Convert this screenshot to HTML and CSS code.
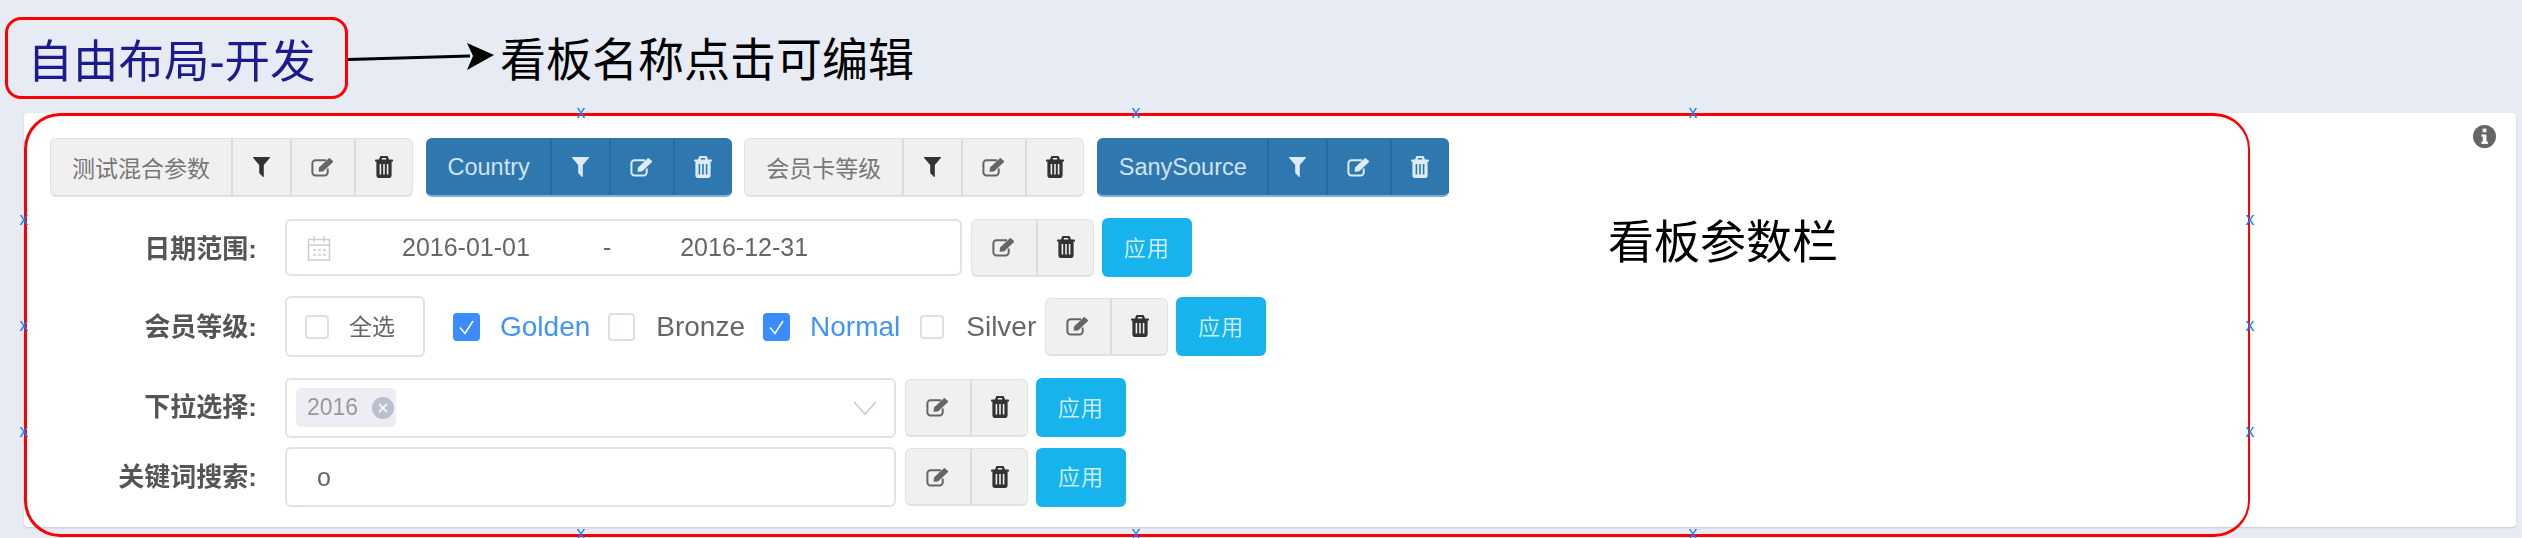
FILE: index.html
```html
<!DOCTYPE html>
<html lang="zh">
<head>
<meta charset="utf-8">
<title>自由布局-开发</title>
<link rel="stylesheet" href="styles.css">
</head>
<body>
<svg class="defs" width="0" height="0" aria-hidden="true">
  <symbol id="i-filter" viewBox="0 0 17 20"><path d="M0.5 0H16.5C17 0 17.2 .6 16.8 1L10.8 8V19.4C10.8 20 10.2 20.1 9.8 19.7L6.6 16.6C6.3 16.3 6.2 16.1 6.2 15.8V8L.2 1C-.2 .6 0 0 .5 0Z"/></symbol>
  <symbol id="i-edit" viewBox="0 0 24 20"><path d="M15 3.2H4.5C2.8 3.2 1.4 4.6 1.4 6.3V15.4C1.4 17.1 2.8 18.5 4.5 18.5H13.6C15.3 18.5 16.7 17.1 16.7 15.4V11.5" fill="none" stroke="currentColor" stroke-width="2"/><path d="M8 10.4 17.6 1.4C18 1 18.6 1 19 1.4L21.8 3.8C22.2 4.2 22.2 4.8 21.8 5.2L12 14.4 7.6 14.8Z"/></symbol>
  <symbol id="i-trash" viewBox="0 0 18 22"><path fill-rule="evenodd" d="M6.4 0H11.6C12.4 0 13 .6 13.2 1.2L14 3.4H17C17.6 3.4 18 3.8 18 4.3V5.6H16.6V19.6C16.6 21 15.6 22 14.4 22H3.6C2.4 22 1.4 21 1.4 19.6V5.6H0V4.3C0 3.8 .4 3.4 1 3.4H4L4.8 1.2C5 .6 5.6 0 6.4 0ZM6.6 3.4H11.4L10.9 2H7.1ZM4.6 8V18.4H6.2V8ZM8.2 8V18.4H9.8V8ZM11.8 8V18.4H13.4V8Z"/></symbol>
  <symbol id="i-check" viewBox="0 0 27 28"><path d="M7 14.5 12 20.5 20 8" fill="none" stroke="#fff" stroke-width="1.6"/></symbol>
</svg>

<header class="topbar">
  <h1 class="title"><span class="title-text">自由布局-开发</span></h1>
  <svg class="arrow" viewBox="0 0 146 30" width="146" height="30" aria-hidden="true"><path d="M0 16.5 122 13" stroke="#000" stroke-width="3" fill="none"/><path d="M119 0 146 12 119 27 125 13Z" fill="#000"/></svg>
  <span class="hint">看板名称点击可编辑</span>
</header>

<main class="panel">
  <svg class="info" viewBox="0 0 23 23" width="23" height="23" aria-hidden="true"><circle cx="11.5" cy="11.5" r="11.5" fill="#666"/><rect x="9.6" y="3.6" width="3.8" height="3.6" fill="#fff"/><path d="M8.4 9.4H13.4V16.6H14.8V19H8.4V16.6H9.8V11.8H8.4Z" fill="#fff"/></svg>

  <div class="row row-params">
    <div class="group">
      <span class="seg seg-label">测试混合参数</span>
      <span class="seg seg-filter"><svg class="ic-filter"><use href="#i-filter"/></svg></span>
      <span class="seg seg-edit"><svg class="ic-edit"><use href="#i-edit"/></svg></span>
      <span class="seg seg-trash"><svg class="ic-trash"><use href="#i-trash"/></svg></span>
    </div>
    <div class="group group-on">
      <span class="seg seg-label">Country</span>
      <span class="seg seg-filter"><svg class="ic-filter"><use href="#i-filter"/></svg></span>
      <span class="seg seg-edit"><svg class="ic-edit"><use href="#i-edit"/></svg></span>
      <span class="seg seg-trash"><svg class="ic-trash"><use href="#i-trash"/></svg></span>
    </div>
    <div class="group">
      <span class="seg seg-label">会员卡等级</span>
      <span class="seg seg-filter"><svg class="ic-filter"><use href="#i-filter"/></svg></span>
      <span class="seg seg-edit"><svg class="ic-edit"><use href="#i-edit"/></svg></span>
      <span class="seg seg-trash"><svg class="ic-trash"><use href="#i-trash"/></svg></span>
    </div>
    <div class="group group-on">
      <span class="seg seg-label">SanySource</span>
      <span class="seg seg-filter"><svg class="ic-filter"><use href="#i-filter"/></svg></span>
      <span class="seg seg-edit"><svg class="ic-edit"><use href="#i-edit"/></svg></span>
      <span class="seg seg-trash"><svg class="ic-trash"><use href="#i-trash"/></svg></span>
    </div>
  </div>

  <div class="row row-date">
    <label class="label">日期范围:</label>
    <div class="field field-date">
      <svg class="cal" viewBox="0 0 26 26" width="26" height="26" aria-hidden="true"><path d="M2.5 4.5H23.5V25H2.5ZM2.5 10H23.5M8 1V7M18 1V7" fill="none" stroke="#c9cdd8" stroke-width="1.5"/><path d="M7 14H10V16H7ZM12 14H15V16H12ZM17 14H20V16H17ZM7 19H10V21H7ZM12 19H15V21H12ZM17 19H20V21H17Z" fill="#d5d8e0"/></svg>
      <span class="date date-from">2016-01-01</span>
      <span class="date date-sep">-</span>
      <span class="date date-to">2016-12-31</span>
    </div>
    <div class="group group-actions">
      <span class="seg seg-edit"><svg class="ic-edit"><use href="#i-edit"/></svg></span>
      <span class="seg seg-trash"><svg class="ic-trash"><use href="#i-trash"/></svg></span>
    </div>
    <button class="apply">应用</button>
  </div>

  <div class="row row-check">
    <label class="label">会员等级:</label>
    <div class="field field-all">
      <span class="box box-small"></span>
      <span class="all-text">全选</span>
    </div>
    <span class="opt opt-on"><span class="box box-on"><svg class="ic-check"><use href="#i-check"/></svg></span><span class="opt-text">Golden</span></span>
    <span class="opt"><span class="box"></span><span class="opt-text">Bronze</span></span>
    <span class="opt opt-on opt-wide"><span class="box box-on"><svg class="ic-check"><use href="#i-check"/></svg></span><span class="opt-text">Normal</span></span>
    <span class="opt opt-last"><span class="box box-small"></span><span class="opt-text">Silver</span></span>
    <div class="group group-actions">
      <span class="seg seg-edit"><svg class="ic-edit"><use href="#i-edit"/></svg></span>
      <span class="seg seg-trash"><svg class="ic-trash"><use href="#i-trash"/></svg></span>
    </div>
    <button class="apply">应用</button>
  </div>

  <div class="row row-select">
    <label class="label">下拉选择:</label>
    <div class="field field-wide field-select">
      <span class="tag">2016<svg class="tag-x" viewBox="0 0 22 22" width="22" height="22" aria-hidden="true"><circle cx="11" cy="11" r="11" fill="#bcc0cc"/><path d="M7 7 15 15M15 7 7 15" stroke="#fff" stroke-width="1.6"/></svg></span>
      <svg class="chev" viewBox="0 0 24 14" width="24" height="14" aria-hidden="true"><path d="M1 1 12 13 23 1" fill="none" stroke="#c6c9d2" stroke-width="1.5"/></svg>
    </div>
    <div class="group group-actions">
      <span class="seg seg-edit"><svg class="ic-edit"><use href="#i-edit"/></svg></span>
      <span class="seg seg-trash"><svg class="ic-trash"><use href="#i-trash"/></svg></span>
    </div>
    <button class="apply">应用</button>
  </div>

  <div class="row row-keyword">
    <label class="label">关键词搜索:</label>
    <div class="field field-wide field-keyword">o</div>
    <div class="group group-actions">
      <span class="seg seg-edit"><svg class="ic-edit"><use href="#i-edit"/></svg></span>
      <span class="seg seg-trash"><svg class="ic-trash"><use href="#i-trash"/></svg></span>
    </div>
    <button class="apply">应用</button>
  </div>
</main>

<div class="callout">
  <span class="mark m-top m-a">x</span><span class="mark m-top m-b">x</span><span class="mark m-top m-c">x</span>
  <span class="mark m-bottom m-a">x</span><span class="mark m-bottom m-b">x</span><span class="mark m-bottom m-c">x</span>
  <span class="mark m-left m-d">x</span><span class="mark m-left m-e">x</span><span class="mark m-left m-f">x</span>
  <span class="mark m-right m-d">x</span><span class="mark m-right m-e">x</span><span class="mark m-right m-f">x</span>
  <span class="callout-text">看板参数栏</span>
</div>
</body>
</html>
```

FILE: styles.css
```css
* { box-sizing: border-box; }

html, body {
  margin: 0;
  padding: 0;
}

body {
  position: relative;
  width: 2522px;
  height: 538px;
  overflow: hidden;
  background: #e7ebf3;
  font-family: "Liberation Sans", "Noto Sans CJK SC", sans-serif;
  color: #666;
}

.defs { position: absolute; }

/* top bar */
.topbar {
  display: flex;
  align-items: center;
  height: 113px;
  padding: 17px 0 14px 5px;
}

.title {
  display: flex;
  align-items: center;
  justify-content: center;
  width: 343px;
  height: 82px;
  margin: 0;
  padding-right: 10px;
  border: 3px solid #f00;
  border-radius: 16px;
  font-size: 45.5px;
  font-weight: 400;
  color: #1b1b8f;
}

.title-text { filter: blur(.6px); }

.arrow { flex: none; }

.hint {
  margin-left: 6px;
  padding-bottom: 4px;
  font-family: "Noto Sans CJK SC", sans-serif;
  font-size: 46px;
  line-height: 1;
  color: #000;
}

/* panel */
.panel {
  position: relative;
  width: 2492px;
  height: 414px;
  margin-left: 24px;
  padding: 25px 0 0 26px;
  background: #fff;
  border-radius: 4px;
  box-shadow: 0 1px 2px rgba(0, 0, 0, .15);
  filter: blur(.6px);
}

.info {
  position: absolute;
  top: 12px;
  right: 20px;
}

.row {
  display: flex;
  align-items: center;
}

.row-params { gap: 12.5px; height: 59px; }
.row-date { height: 59px; margin-top: 21px; }
.row-check { height: 61px; margin-top: 19px; }
.row-select { height: 61px; margin-top: 20px; }
.row-keyword { height: 60px; margin-top: 9px; }

.label {
  flex: none;
  width: 207px;
  margin-right: 28px;
  padding-bottom: 3px;
  font-size: 26px;
  font-weight: 700;
  text-align: right;
  color: #555;
}

.row-check .label,
.row-keyword .label { padding-bottom: 5px; }
.row-select .label { padding-bottom: 7px; }

/* button groups */
.group {
  display: flex;
  flex: none;
  height: 59px;
  background: #f0f0f0;
  border: 1px solid #e2e2e2;
  border-bottom: 2px solid #e0e0e0;
  border-radius: 6px;
  color: #333;
}

.group-on {
  background: #2f78af;
  border-color: #2f78af;
  border-bottom-color: #7fb0d3;
  color: #dcebf7;
}

.group-actions { height: 58px; margin: 0 8px 0 9px; }
.group-actions .seg-trash { width: 57px; }

.seg {
  display: flex;
  align-items: center;
  justify-content: center;
  height: 100%;
  border-left: 2px solid #dcdcdc;
}

.group-on .seg { border-left-color: #296b9e; }

.seg:first-child { border-left: 0; }

.seg-label {
  padding: 0 21px 1px;
  font-size: 23px;
  color: #777;
}

.group-on .seg-label {
  padding: 0 20px 0 21px;
  font-size: 23.5px;
  color: #cfe3f3;
}

.seg-filter { width: 59px; }
.seg-edit { width: 64px; color: #666; }
.seg-trash { width: 58px; }

.group-on .seg-edit { color: #dcebf7; }

.ic-filter { width: 17px; height: 20px; fill: currentColor; }
.ic-edit { width: 24px; height: 20px; fill: currentColor; }
.ic-trash { width: 18px; height: 22px; fill: currentColor; }
.ic-check { display: block; width: 100%; height: 100%; }

/* apply */
.apply {
  flex: none;
  width: 90px;
  height: 59px;
  padding: 0 0 4px;
  border: 0;
  border-radius: 6px;
  background: #17b3ec;
  font-family: inherit;
  font-size: 22px;
  letter-spacing: 1px;
  color: #c9edfb;
}

/* fields */
.field {
  display: flex;
  flex: none;
  align-items: center;
  background: #fff;
  border: 2px solid #e0e2ea;
  border-radius: 6px;
}

.field-date {
  width: 677px;
  height: 57px;
  padding-left: 19px;
  font-size: 25px;
}

.cal { flex: none; }
.date { color: #666; }
.date-from { margin-left: 70px; }
.date-sep { margin-left: 73px; }
.date-to { margin-left: 69px; }

.field-all {
  width: 140px;
  height: 61px;
  margin-right: 28px;
  padding-left: 18px;
}

.all-text {
  margin-left: 20px;
  padding-bottom: 3px;
  font-size: 23px;
  color: #666;
}

.field-wide { width: 611px; height: 60px; }

.field-select {
  justify-content: space-between;
  padding: 0 17px 0 9px;
}

.field-keyword {
  padding-left: 30px;
  font-size: 25px;
  color: #666;
}

.tag {
  display: flex;
  align-items: center;
  width: 100px;
  height: 39px;
  padding-left: 11px;
  background: #eceef3;
  border-radius: 5px;
  font-size: 23px;
  color: #999;
}

.tag-x { margin-left: 14px; }

/* checkboxes */
.box {
  display: block;
  flex: none;
  width: 27px;
  height: 28px;
  background: #fff;
  border: 2px solid #dcdfe6;
  border-radius: 4px;
}

.box-small { width: 24px; height: 24px; }

.box-on {
  background: #3a8cff;
  border: 0;
}

.opt {
  display: flex;
  flex: none;
  align-items: center;
  gap: 21px;
  margin-right: 18px;
  font-size: 28px;
  color: #666;
}

.opt-on { gap: 20px; color: #4094ff; }
.opt-wide { margin-right: 20px; }
.opt-last { gap: 22px; margin-right: 0; }
.opt-last + .group-actions { margin-left: 9px; }

/* red annotation box */
.callout {
  position: absolute;
  top: 113px;
  left: 24px;
  width: 2226px;
  height: 424px;
  border: 3px solid #f00;
  border-right-width: 2px;
  border-radius: 36px;
  pointer-events: none;
}

.callout-text {
  position: absolute;
  top: 95px;
  left: 1581px;
  font-family: "Noto Sans CJK SC", sans-serif;
  font-size: 46px;
  line-height: 1.2;
  color: #000;
}

.mark {
  position: absolute;
  width: 10px;
  font-size: 18px;
  line-height: 10px;
  text-align: center;
  color: #1a7cff;
}

.m-top { top: -9px; }
.m-bottom { bottom: -4px; }
.m-left { left: -8px; }
.m-right { right: -7px; }
.m-a { left: 549px; }
.m-b { left: 1104px; }
.m-c { left: 1661px; }
.m-d { top: 98px; }
.m-e { top: 204px; }
.m-f { top: 310px; }
```
